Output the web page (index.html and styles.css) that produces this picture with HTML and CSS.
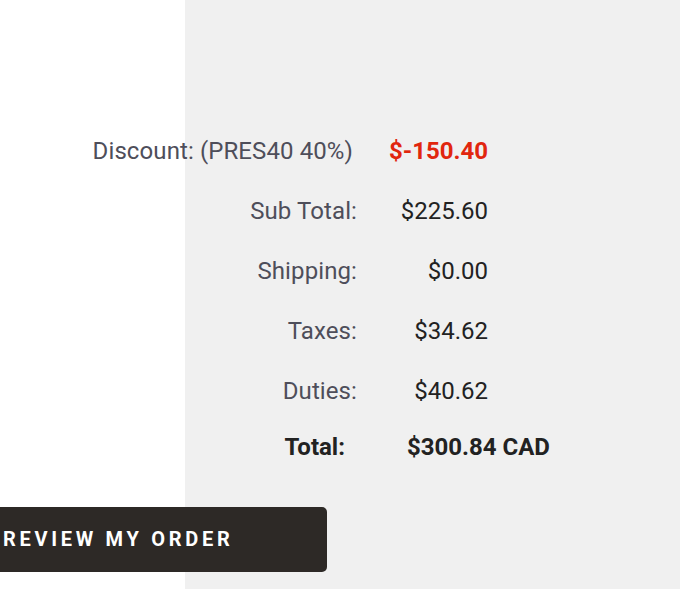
FILE: index.html
```html
<!DOCTYPE html>
<html lang="en">
<head>
    <meta charset="UTF-8">
    <title>Order Summary</title>
    <link rel="stylesheet" href="styles.css">
</head>
<body>
<div class="page">
    <div class="summary">
        <div class="row">
            <span class="label label-discount">Discount: (PRES40 40%)</span>
            <span class="value discount">$-150.40</span>
        </div>
        <div class="row">
            <span class="label">Sub Total:</span>
            <span class="value">$225.60</span>
        </div>
        <div class="row">
            <span class="label">Shipping:</span>
            <span class="value">$0.00</span>
        </div>
        <div class="row">
            <span class="label">Taxes:</span>
            <span class="value">$34.62</span>
        </div>
        <div class="row">
            <span class="label">Duties:</span>
            <span class="value">$40.62</span>
        </div>
        <div class="total">
            <span class="total-label">Total:</span>
            <span class="total-value">$300.84 CAD</span>
        </div>
    </div>
    <button type="button" class="review-btn">REVIEW MY ORDER</button>
</div>
</body>
</html>
```
FILE: styles.css
```css
* {
    margin: 0;
    padding: 0;
    border: 0;
    box-sizing: border-box;
}

body {
    font: 24px/1.2 Roboto, "Liberation Sans", sans-serif;
    background: #fff;
    overflow: hidden;
}

.page {
    height: 589px;
    padding-top: 121px;
    background: linear-gradient(to right, #fff 185px, #f0f0f0 185px);
}

.row {
    display: grid;
    grid-template-columns: 357px 131px;
    height: 60px;
    align-items: center;
}

.label {
    text-align: right;
    color: #4e4e5a;
    letter-spacing: 0.1px;
}

.label-discount {
    padding-right: 4px;
}

.value {
    text-align: right;
    color: #222;
}

.discount {
    color: #e1260e;
    font-weight: bold;
}

.total {
    display: grid;
    grid-template-columns: 345px auto;
    column-gap: 62px;
    height: 52px;
    align-items: center;
    font-weight: bold;
    color: #222;
}

.total-label {
    text-align: right;
}

.review-btn {
    display: block;
    width: 347px;
    height: 65px;
    margin: 34px 0 0 -20px;
    padding: 0 0 2px 23px;
    text-align: left;
    background: #2d2926;
    border-radius: 5px;
    color: #fff;
    font: bold 20px Roboto, "Liberation Sans", sans-serif;
    letter-spacing: 3.7px;
}
```
